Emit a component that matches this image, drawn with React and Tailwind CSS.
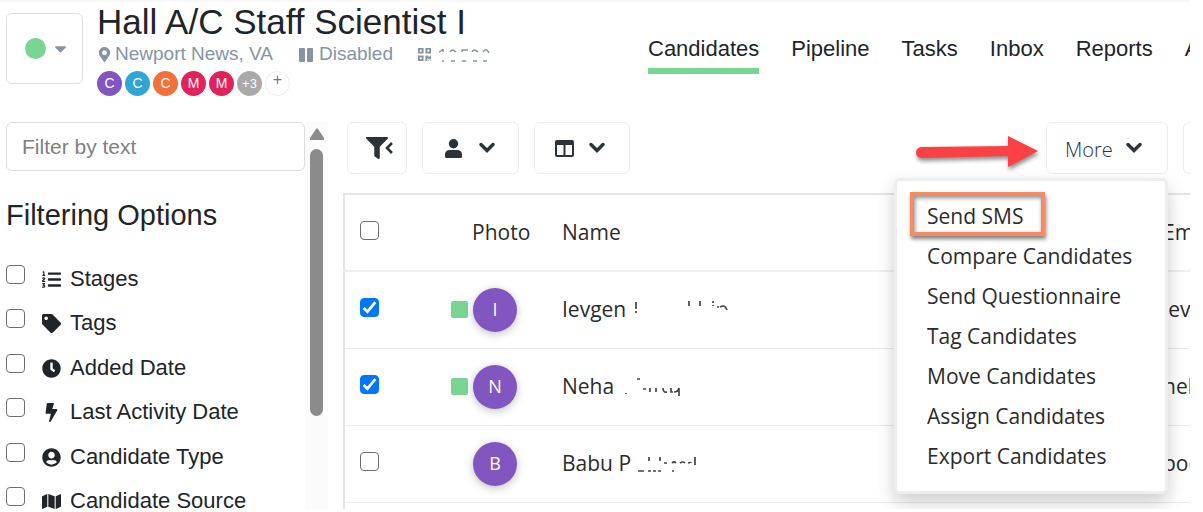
import { FaFilter, FaListOl, FaTag, FaClock, FaBolt, FaUserCircle, FaMap, FaMapMarkerAlt, FaQrcode, FaCaretDown } from "react-icons/fa";

const arial = "font-['Liberation_Sans',Arial,sans-serif]";

const team = [
  ["C", "bg-[#8256c0]"],
  ["C", "bg-[#31a5d4]"],
  ["C", "bg-[#f4703a]"],
  ["M", "bg-[#e3215a]"],
  ["M", "bg-[#e3215a]"],
];

const tabs = ["Candidates", "Pipeline", "Tasks", "Inbox", "Reports", "Activity"];

const filters = [
  ["Stages", FaListOl],
  ["Tags", FaTag],
  ["Added Date", FaClock],
  ["Last Activity Date", FaBolt],
  ["Candidate Type", FaUserCircle],
  ["Candidate Source", FaMap],
];

const rows = [
  { name: "Ievgen", initial: "I", on: true, email: "ievg", marks: "M10 2v7M10 11v2M63 1v5M74 1v5M87 1v2M87 5v1M91 7h2M94 7q5-3 7 3" },
  { name: "Neha", initial: "N", on: true, email: "neha", marks: "M12 16v1M23 2h3M29 12h3M36 11v4M42 11v4M49 11q0 5 4 4M57 11v4h2M60 15q4 0 5-4v8" },
  { name: "Babu P", initial: "B", on: false, email: "pook", marks: "M7 17h6M18 3v4M17 17h3M22 17h3M27 17h3M29 3v4M33 9h3M41 17h2M41 9q2-2 4 0M49 9q3-2 5 0M57 9q3-1 3 0M64 3v8" },
];

const actions = ["Send SMS", "Compare Candidates", "Send Questionnaire", "Tag Candidates", "Move Candidates", "Assign Candidates", "Export Candidates"];

function Chevron() {
  return (
    <svg viewBox="0 0 16 12" className="h-[12px] w-[16px] shrink-0 fill-none stroke-current stroke-[3.4]" aria-hidden="true">
      <path d="M2 2.500L8 8.500 14 2.500" strokeLinecap="round" />
    </svg>
  );
}

function Check({ label, id, on }) {
  return (
    <input
      id={id}
      type="checkbox"
      aria-label={label}
      defaultChecked={on}
      className="m-0 block size-[19px] shrink-0 appearance-none rounded-[4px] border border-[#6d6d6d] bg-white bg-center bg-no-repeat checked:border-[#0075ff] checked:bg-[#0075ff] checked:bg-[url('data:image/svg+xml,%3Csvg%20xmlns=%22http://www.w3.org/2000/svg%22%20viewBox=%220%200%2016%2016%22%3E%3Cpath%20d=%22M2.5%208.5l3.5%203.5%207.5-9%22%20fill=%22none%22%20stroke=%22white%22%20stroke-width=%222.6%22/%3E%3C/svg%3E')]"
    />
  );
}

function Header() {
  return (
    <header className="flex h-[110px] shrink-0 items-start border-t-2 border-[#f7f7f7] pl-[6px]">
      <button aria-label="Job status" className="mt-[11px] flex h-[71px] w-[77px] shrink-0 items-center gap-[5px] rounded-md border border-[#dedede] pl-[18px]">
        <span className="size-[21px] rounded-full bg-[#78d592]" />
        <FaCaretDown className="size-[19px] text-[#8795a3]" />
      </button>
      <div className="ml-[14px] w-[551px] shrink-0">
        <h1 className="text-[35px] leading-[40px]">Hall A/C Staff Scientist I</h1>
        <div className="flex h-[25px] items-center text-[19px] text-[#8494a5]">
          <FaMapMarkerAlt className="mr-[3px] size-[15px]" />
          <span>Newport News, VA</span>
          <svg viewBox="0 0 14 14" className="mr-[6px] ml-[26px] size-[14px] fill-current" aria-hidden="true">
            <rect width="6" height="14" rx="1" />
            <rect x="8" width="6" height="14" rx="1" />
          </svg>
          <span>Disabled</span>
          <FaQrcode className="ml-[24px] size-[15px]" />
          <svg viewBox="0 0 54 14" className="ml-[6px] h-[14px] w-[54px] fill-none stroke-[#8494a5] stroke-[1.5]" aria-hidden="true">
            <path d="M1 4q3-1 4-3v3M4 13h2M12 4q2-4 6 0M13 13h4M24 4v-2h6M24 13h4M34 4q2-4 6 0M35 13h4M45 4q3-5 6 1M45 13h4" />
          </svg>
        </div>
        <div className="mt-1 flex gap-[3px] text-[14px] leading-[25px] text-white">
          {team.map(([letter, color], i) => (
            <span key={i} className={"size-[25px] rounded-full text-center " + color}>{letter}</span>
          ))}
          <span className="size-[25px] rounded-full bg-[#a9a9a9] text-center text-[13px]">+3</span>
          <button aria-label="Add team member" className="flex size-[25px] items-start justify-center rounded-full border border-[#ececec] text-[16px] leading-[16px] text-[#6c7a89]">+</button>
        </div>
      </div>
      <nav className="mt-[34px] flex min-w-0 flex-1 gap-[32px] overflow-hidden text-[22px] leading-[26px]">
        {tabs.map((tab, i) => (
          <a key={tab} href="#" className={"shrink-0 pb-[6px] " + (i === 0 ? "border-b-[6px] border-[#78d592]" : "")}>{tab}</a>
        ))}
      </nav>
    </header>
  );
}

function Sidebar() {
  return (
    <aside className="flex w-[328px] shrink-0 pt-3 pl-[6px]">
      <div className="w-[299px] shrink-0">
        <input aria-label="Filter by text" placeholder="Filter by text" className="h-[49px] w-full rounded-md border border-[#dcdcdc] px-[15px] text-[21px] placeholder:text-[#808080]" />
        <h2 className="mt-[26px] text-[29px] leading-[36px]">Filtering Options</h2>
        <ul className="mt-[32px]">
          {filters.map(([label, Icon]) => (
            <li key={label} className="flex h-[44px] items-start whitespace-nowrap nth-[2n]:h-[45px]">
              <Check id={"filter-" + label} label={label} />
              <label htmlFor={"filter-" + label} className="ml-[16px] flex items-center gap-[9px] pt-[2px] text-[22px] leading-[24px]">
                <span className="flex w-[20px] justify-center"><Icon className="size-[19px]" /></span>
                {label}
              </label>
            </li>
          ))}
        </ul>
      </div>
      <div className="flex w-[23px] flex-col items-center bg-[#fbfbfb]">
        <svg viewBox="0 0 14 12" className="mt-[6px] h-[12px] w-[14px] shrink-0 fill-[#8b8b8b]" aria-hidden="true">
          <path d="M6 1q1-1.500 2 0l6 9q.5 2-1 2H1q-1.500 0-1-2z" />
        </svg>
        <div className="mt-[9px] h-[267px] w-[13px] rounded-full bg-[#8b8b8b]" />
      </div>
    </aside>
  );
}

const toolButton = "flex h-[52px] shrink-0 items-center rounded-md border border-[#ececec] bg-white text-[#2b3238] ";

function Toolbar() {
  return (
    <div className="flex h-[71px] pl-1">
      <button aria-label="Toggle filters" className={toolButton + "mr-[15px] w-[60px] pl-[18px]"}>
        <FaFilter className="size-[22px]" />
        <svg viewBox="0 0 9 12" className="-ml-1 h-[12px] w-[9px] fill-none stroke-current stroke-[2.6]" aria-hidden="true"><path d="M8 1L3 6l5 5" /></svg>
      </button>
      <button aria-label="Candidate view" className={toolButton + "mr-[15px] w-[97px] gap-[17px] pl-[22px]"}>
        <svg viewBox="0 0 17 19" className="h-[19px] w-[17px] fill-current" aria-hidden="true">
          <circle cx="8.500" cy="4.700" r="4.700" />
          <path d="M5 11h7q5 0 5 5v1.500q0 1.500-1.500 1.500h-14Q0 19 0 17.500V16q0-5 5-5z" />
        </svg>
        <Chevron />
      </button>
      <button aria-label="Columns" className={toolButton + "w-[96px] gap-[15px] pl-[20px]"}>
        <svg viewBox="0 0 19 17" className="h-[17px] w-[19px]" aria-hidden="true">
          <path d="M2 0h15q2 0 2 2v13q0 2-2 2H2q-2 0-2-2V2q0-2 2-2zM2 5v10h6.500V5zM10.500 5v10H17V5z" fillRule="evenodd" fill="currentColor" />
        </svg>
        <Chevron />
      </button>
      <svg viewBox="0 0 126 40" className="mt-3 mr-[6px] ml-auto h-[40px] w-[126px] shrink-0 drop-shadow-[1px_3px_2px_rgba(0,0,0,.45)]" aria-hidden="true">
        <path d="M7 13L94 12V2L124 17 94 33V22L7 24Q2 23 2 18.500T7 13z" fill="#fb4143" />
      </svg>
      <div className="relative mr-[15px] shrink-0">
        <button aria-haspopup="menu" aria-expanded="true" className={toolButton + "w-[122px] gap-[13px] pl-[18px] text-[20px]"}>
          <span className="pt-1 font-['Open_Sans',sans-serif] font-light">More</span><Chevron />
        </button>
        <ul role="menu" className="absolute top-[56px] right-0 z-10 w-[274px] rounded-md border-[3px] border-[#eceef0] bg-white pt-[16px] pb-[14px] shadow-[0_8px_18px_rgba(0,0,0,.2)]">
          {actions.map((action) => (
            <li key={action} role="none" className="flex h-[40px] items-center">
              <button role="menuitem" className="h-[40px] w-full pl-[30px] text-left text-[21px] whitespace-nowrap">{action}</button>
            </li>
          ))}
          <li aria-hidden="true" className="pointer-events-none absolute top-[11px] left-[13px] h-[44px] w-[135px] border-4 border-[#f58b62] shadow-[1px_3px_4px_rgba(0,0,0,.5),inset_1px_2px_4px_rgba(0,0,0,.45)]" />
        </ul>
      </div>
      <button aria-label="More tools" className={toolButton + "w-[7px] rounded-r-none border-r-0"} />
    </div>
  );
}

function Candidates() {
  return (
    <main className="min-w-0 flex-1 overflow-hidden pt-3 pl-[15px] font-['Open_Sans','Noto_Sans',sans-serif] text-[#2b2b2b]">
      <Toolbar />
      <table className="w-full table-fixed border-collapse border-t-2 border-l-2 border-[#e3e5e7] text-left text-[21px]">
        <thead>
          <tr className="h-[77px] border-b-2 border-[#eef1f1]">
            <th className="w-[107px] pb-1 pl-[15px]"><Check label="Select all candidates" /></th>
            <th className="w-[111px] pl-[21px] font-normal">Photo</th>
            <th className="font-normal">Name</th>
            <th className="w-[27px] font-normal whitespace-nowrap">Email</th>
          </tr>
        </thead>
        <tbody>
          {rows.map((row) => (
            <tr key={row.name} className="h-[77px] border-b border-[#e9e9e9]">
              <td className="pb-1 pl-[15px]"><Check label={"Select " + row.name} on={row.on} /></td>
              <td>
                <div className="flex items-center gap-[5px]">
                  <span className={"size-[17px] rounded-[2px] " + (row.on ? "bg-[#78d592]" : "")} />
                  <span className="flex size-[44px] items-center justify-center rounded-full bg-[#8256c0] text-[18px] text-white shadow-[0_2px_8px_rgba(0,0,0,.25)]">{row.initial}</span>
                </div>
              </td>
              <td>
                <div className="flex items-center">
                  {row.name}
                  <svg viewBox="0 0 110 20" className="h-[20px] w-[110px] fill-none stroke-[#444] stroke-[1.7]" aria-hidden="true"><path d={row.marks} /></svg>
                </div>
              </td>
              <td className="whitespace-nowrap">{row.email}</td>
            </tr>
          ))}
          <tr className="h-[20px]"><td colSpan="4" /></tr>
        </tbody>
      </table>
    </main>
  );
}

export default function App() {
  return (
    <div className={"h-screen overflow-hidden bg-white pr-[13px] pb-[3px] text-[#212529] " + arial}>
      <div className="flex h-full flex-col overflow-hidden">
        <Header />
        <div className="flex min-h-0 flex-1 overflow-hidden">
          <Sidebar />
          <Candidates />
        </div>
      </div>
    </div>
  );
}
